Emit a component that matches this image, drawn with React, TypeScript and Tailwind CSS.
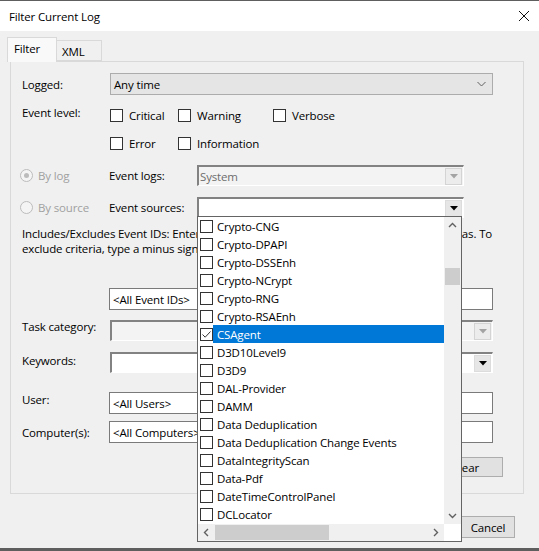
import React from "react";

const sources = [
	"Crypto-CNG",
	"Crypto-DPAPI",
	"Crypto-DSSEnh",
	"Crypto-NCrypt",
	"Crypto-RNG",
	"Crypto-RSAEnh",
	"CSAgent",
	"D3D10Level9",
	"D3D9",
	"DAL-Provider",
	"DAMM",
	"Data Deduplication",
	"Data Deduplication Change Events",
	"DataIntegrityScan",
	"Data-Pdf",
	"DateTimeControlPanel",
	"DCLocator",
];

function Box({ checked }: { checked?: boolean }) {
	return (
		<span className="w-[13px] h-[13px] shrink-0 border border-[#333333] bg-white flex items-center justify-center">
			{checked && (
				<svg width="11" height="11" viewBox="0 0 11 11">
					<path d="M1.5 5.5 L4.2 8.2 L9.5 2.5" stroke="#333333" strokeWidth="1" fill="none" />
				</svg>
			)}
		</span>
	);
}

function Radio({ on }: { on?: boolean }) {
	return (
		<span className="w-[13px] h-[13px] shrink-0 rounded-full border border-[#bcbcbc] bg-[#f4f4f4] flex items-center justify-center">
			{on && <span className="w-[5px] h-[5px] rounded-full bg-[#bcbcbc]" />}
		</span>
	);
}

function DropArrow({ disabled }: { disabled?: boolean }) {
	return (
		<span
			className={
				disabled
					? "w-[17px] h-[17px] shrink-0 border border-[#d4d4d4] bg-[#ececec] flex items-center justify-center"
					: "w-[17px] h-[17px] shrink-0 border border-[#dcdcdc] bg-[#e6e6e6] flex items-center justify-center"
			}
		>
			<svg width="8" height="5" viewBox="0 0 8 5">
				<path d="M0 0 H8 L4 4.5 Z" fill={disabled ? "#a3a3a3" : "#000000"} />
			</svg>
		</span>
	);
}

// classic sunken combo box
function Combo({
	text,
	disabled,
	white,
	className,
}: {
	text?: string;
	disabled?: boolean;
	white?: boolean;
	className: string;
}) {
	return (
		<div
			className={
				"shrink-0 flex items-center border-t-2 border-l-2 border-t-[#828282] border-l-[#828282] border-b border-r border-b-white border-r-white pr-[1px] " +
				(white ? "bg-white " : "bg-[#f3f3f3] ") +
				className
			}
		>
			<span className={"flex-1 min-w-0 pl-[1px] truncate " + (disabled ? "text-[#6d6d6d]" : "text-black")}>
				{text}
			</span>
			<DropArrow disabled={disabled} />
		</div>
	);
}

function TextBox({ text, className }: { text: string; className: string }) {
	return (
		<div className={"shrink-0 flex items-center bg-white border border-[#7a7a7a] pl-[3px] " + className}>
			{text}
		</div>
	);
}

function Chevron({ d }: { d: string }) {
	return (
		<svg width="9" height="9" viewBox="0 0 9 9">
			<path d={d} stroke="#606060" strokeWidth="1.4" fill="none" />
		</svg>
	);
}

function SourceList() {
	return (
		<div className="absolute left-[197px] top-[215px] w-[265px] h-[326px] border border-[#646464] bg-white flex flex-col">
			<div className="flex flex-1 min-h-0">
				<div className="flex-1 overflow-hidden">
					{sources.map((name) => {
						const on = name === "CSAgent";
						return (
							<div key={name} className="h-[18px] flex items-center">
								<span className="pl-[2px]">
									<Box checked={on} />
								</span>
								<span
									className={
										on
											? "flex-1 h-[18px] flex items-center pl-[4px] bg-[#0078d7] text-white whitespace-nowrap"
											: "flex-1 h-[18px] flex items-center pl-[4px] whitespace-nowrap"
									}
								>
									{name}
								</span>
							</div>
						);
					})}
				</div>
				{/* vertical scroll bar */}
				<div className="w-[17px] bg-[#f0f0f0] flex flex-col items-center">
					<div className="h-[17px] flex items-center justify-center">
						<Chevron d="M1 6 L4.5 2.5 L8 6" />
					</div>
					<div className="mt-[34px] w-[15px] h-[17px] bg-[#cdcdcd]" />
					<div className="flex-1" />
					<div className="h-[17px] flex items-center justify-center">
						<Chevron d="M1 3 L4.5 6.5 L8 3" />
					</div>
				</div>
			</div>
			{/* horizontal scroll bar */}
			<div className="h-[17px] flex">
				<div className="flex-1 bg-[#f0f0f0] flex items-center">
					<span className="w-[17px] flex items-center justify-center">
						<Chevron d="M6 1 L2.5 4.5 L6 8" />
					</span>
					<span className="w-[114px] h-[15px] bg-[#cdcdcd]" />
					<span className="flex-1" />
					<span className="w-[17px] flex items-center justify-center">
						<Chevron d="M3 1 L6.5 4.5 L3 8" />
					</span>
				</div>
				<div className="w-[17px] bg-white" />
			</div>
		</div>
	);
}

export default function App() {
	return (
		<div className="relative w-[539px] h-[551px] overflow-hidden bg-[#f0f0f0] border-t border-b-[3px] border-[#5e5e5e] font-['Open_Sans',sans-serif] text-[11.5px] tracking-[-0.15px] leading-[15px] text-black">
			{/* title bar */}
			<div className="h-[30px] bg-white flex items-center justify-between pl-[9px] pr-[9px]">
				<span>Filter Current Log</span>
				<svg width="12" height="12" viewBox="0 0 12 12">
					<path d="M1 1 L11 11 M11 1 L1 11" stroke="#111111" strokeWidth="1" />
				</svg>
			</div>

			{/* tabs */}
			<div className="mt-[6px] pl-[7px] flex items-end h-[24px]">
				<div className="relative z-10 -mb-px w-[50px] h-[25px] border border-b-0 border-[#d9d9d9] bg-[#f9f9f9] pl-[6px] pt-[3px]">
					Filter
				</div>
				<div className="w-[45px] h-[21px] border border-l-0 border-[#d9d9d9] bg-[#f0f0f0] pl-[5px] pt-[3px]">
					XML
				</div>
			</div>

			{/* tab page */}
			<div className="ml-[10px] w-[514px] h-[433px] border border-[#d9d9d9] bg-[#f0f0f0] pl-[11px] flex flex-col">
				<div className="mt-[11px] h-[22px] flex items-center">
					<span className="w-[88px] shrink-0">Logged:</span>
					<div className="shrink-0 w-[383px] h-[22px] bg-[#e5e5e5] border border-[#acacac] flex items-center justify-between pl-[3px] pr-[6px]">
						<span>Any time</span>
						<svg width="9" height="6" viewBox="0 0 9 6">
							<path d="M0.5 1 L4.5 5 L8.5 1" stroke="#606060" strokeWidth="1" fill="none" />
						</svg>
					</div>
				</div>

				<div className="mt-[14px] h-[13px] flex items-center">
					<span className="w-[88px] shrink-0 -mt-[6px]">Event level:</span>
					<label className="w-[68px] shrink-0 flex items-center gap-[6px]">
						<Box />
						<span>Critical</span>
					</label>
					<label className="w-[95px] shrink-0 flex items-center gap-[6px]">
						<Box />
						<span>Warning</span>
					</label>
					<label className="flex items-center gap-[6px]">
						<Box />
						<span>Verbose</span>
					</label>
				</div>

				<div className="mt-[15px] h-[13px] flex items-center pl-[88px]">
					<label className="w-[68px] shrink-0 flex items-center gap-[6px]">
						<Box />
						<span>Error</span>
					</label>
					<label className="flex items-center gap-[6px]">
						<Box />
						<span>Information</span>
					</label>
				</div>

				<div className="mt-[15px] h-[21px] grid grid-cols-[89px_88px_267px] items-center -ml-[2px]">
					<label className="flex items-center gap-[5px] text-[#a0a0a0]">
						<Radio on />
						<span>By log</span>
					</label>
					<span>Event logs:</span>
					<Combo text="System" disabled className="w-[267px] h-[21px]" />
				</div>

				<div className="mt-[11px] h-[21px] grid grid-cols-[89px_88px_267px] items-center -ml-[2px]">
					<label className="flex items-center gap-[5px] text-[#a0a0a0]">
						<Radio />
						<span>By source</span>
					</label>
					<span>Event sources:</span>
					<Combo white className="w-[267px] h-[21px]" />
				</div>

				<div className="mt-[8px] whitespace-nowrap">
					<div>Includes/Excludes Event IDs: Enter ID numbers and/or ID ranges separated by commas. To</div>
					<div>exclude criteria, type a minus sign first. For example 1,3,5-99,-76</div>
				</div>

				<div className="mt-[32px] flex items-center pl-[87px]">
					<TextBox text="<All Event IDs>" className="w-[384px] h-[22px]" />
				</div>

				<div className="mt-[10px] h-[21px] flex items-center">
					<span className="w-[88px] shrink-0 -mt-[8px]">Task category:</span>
					<Combo disabled className="w-[383px] h-[21px]" />
				</div>

				<div className="mt-[11px] h-[21px] flex items-center">
					<span className="w-[88px] shrink-0 -mt-[5px]">Keywords:</span>
					<Combo white className="w-[383px] h-[21px]" />
				</div>

				<div className="mt-[19px] h-[22px] flex items-center">
					<span className="w-[87px] shrink-0 -mt-[8px]">User:</span>
					<TextBox text="<All Users>" className="w-[384px] h-[22px]" />
				</div>

				<div className="mt-[7px] h-[22px] flex items-center">
					<span className="w-[87px] shrink-0">Computer(s):</span>
					<TextBox text="<All Computers>" className="w-[384px] h-[22px]" />
				</div>

				<div className="mt-[14px] flex justify-end pr-[20px]">
					<button className="w-[75px] h-[20px] bg-[#e1e1e1] border border-[#adadad] flex items-center justify-center">
						Clear
					</button>
				</div>
			</div>

			{/* dialog buttons */}
			<div className="mt-[22px] flex justify-end gap-[10px] pr-[24px]">
				<button className="w-[75px] h-[22px] bg-[#e1e1e1] border border-[#adadad]">OK</button>
				<button className="w-[75px] h-[22px] bg-[#e1e1e1] border border-[#adadad] pl-[21px]">Cancel</button>
			</div>

			<SourceList />
		</div>
	);
}
